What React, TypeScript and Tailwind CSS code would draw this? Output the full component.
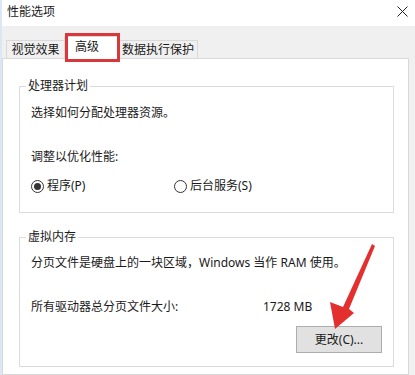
import React from 'react';

const font = { fontFamily: '"Noto Sans", "Noto Sans CJK SC", sans-serif' };

const Radio = ({ checked, label }: { checked?: boolean; label: string }) => (
  <div className="flex items-center gap-[3px]">
    <span className="w-[13px] h-[13px] rounded-full border border-[#333] bg-white flex items-center justify-center">
      {checked && <span className="w-[7px] h-[7px] rounded-full bg-[#333]" />}
    </span>
    <span>{label}</span>
  </div>
);

const App = () => {
  return (
    <div
      className="relative w-[415px] h-[375px] overflow-hidden bg-[#f0f0f0] flex text-[12px] leading-[16px] text-[#1a1a1a]"
      style={font}
    >
      <div className="w-[2px] bg-[#dbe7f4] shrink-0" />
      <div className="flex-1 flex flex-col">
        {/* title bar */}
        <div className="h-[26px] bg-white flex items-center justify-between pl-[5px] pr-[7px] shrink-0">
          <span className="-mt-[2px]">性能选项</span>
          <svg width="11" height="11" viewBox="0 0 11 11" className="-mt-[3px]">
            <path d="M0.5 0.5 L10.5 10.5 M10.5 0.5 L0.5 10.5" stroke="#222" strokeWidth="1" />
          </svg>
        </div>

        {/* tabs */}
        <div className="h-[32px] flex items-end pl-[4px] shrink-0">
          <div className="w-[58px] h-[18px] border-l border-t border-[#d9d9d9] flex items-center justify-center">
            视觉效果
          </div>
          <div className="relative z-10 -mb-[1px] w-[55px] h-[23px] bg-white border-l border-t border-r border-[#d9d9d9] flex items-center pl-[10px] pb-[3px]">
            高级
          </div>
          <div className="w-[79px] h-[18px] border-t border-r border-[#d9d9d9] flex items-center justify-center">
            数据执行保护
          </div>
        </div>

        {/* panel */}
        <div className="flex-1 mr-[6px] bg-white border border-[#d9d9d9] pl-[16px] pr-[14px] pt-[19px]">
          <fieldset className="border border-[#dcdcdc]">
            <legend className="ml-[6px] px-[2px] leading-[16px]">处理器计划</legend>
            <div className="pl-[11px] pb-[18px]">
              <div className="mt-[11px]">选择如何分配处理器资源。</div>
              <div className="mt-[28px]">调整以优化性能:</div>
              <div className="mt-[13px] flex">
                <div className="w-[143px]">
                  <Radio checked label="程序(P)" />
                </div>
                <Radio label="后台服务(S)" />
              </div>
            </div>
          </fieldset>

          <fieldset className="mt-[16px] border border-[#dcdcdc]">
            <legend className="ml-[6px] px-[2px] leading-[16px]">虚拟内存</legend>
            <div className="pl-[11px] pr-[11px] pb-[13px]">
              <div className="mt-[10px]">分页文件是硬盘上的一块区域，Windows 当作 RAM 使用。</div>
              <div className="mt-[28px] flex">
                <span className="w-[232px]">所有驱动器总分页文件大小:</span>
                <span>1728 MB</span>
              </div>
              <div className="mt-[11px] flex justify-end">
                <button className="w-[86px] h-[27px] bg-[#e1e1e1] border border-[#adadad] flex items-center justify-center">
                  更改(C)...
                </button>
              </div>
            </div>
          </fieldset>
        </div>
      </div>

      {/* red highlight around selected tab */}
      <div className="absolute left-[65px] top-[33px] w-[55px] h-[29px] border-[3px] border-[#d8383c] z-20" />

      {/* red arrow */}
      <svg className="absolute left-0 top-0 z-20" width="415" height="375" viewBox="0 0 415 375">
        <polygon
          points="372,244 375,246 349,309 354,313 335,329 330,302 343,307"
          fill="#e3302f"
        />
      </svg>
    </div>
  );
};

export default App;
